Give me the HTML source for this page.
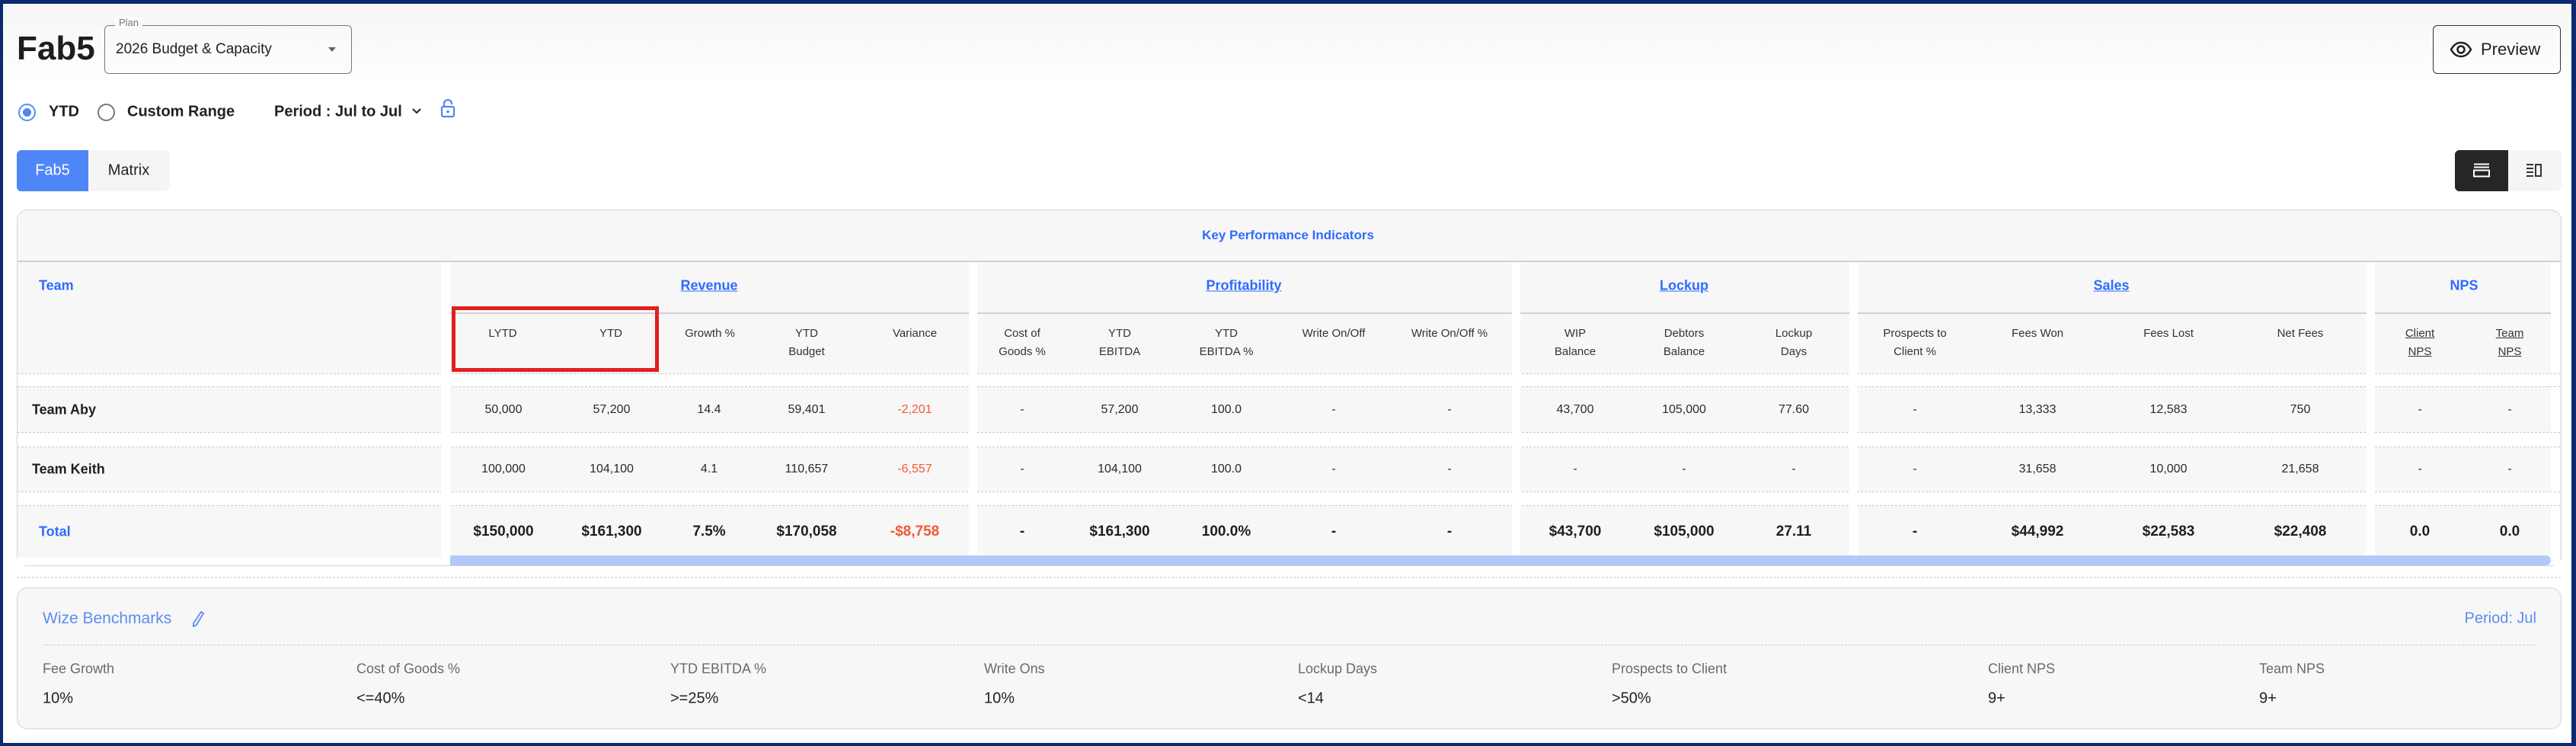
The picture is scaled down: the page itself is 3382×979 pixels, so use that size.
<!DOCTYPE html>
<html><head><meta charset="utf-8"><style>
*{margin:0;padding:0;box-sizing:border-box}
body{width:3382px;height:979px;overflow:hidden;background:#0b2a70;font-family:"Liberation Sans",sans-serif;color:#1f1f1f}
#page{position:absolute;left:4px;top:5px;width:3372px;height:970px;background:linear-gradient(#f6f6f6 0,#fff 110px,#fff 100%);overflow:hidden}
.a{position:absolute;white-space:nowrap}
.c{position:absolute;white-space:nowrap;transform:translate(-50%,-50%);text-align:center}
.l{position:absolute;white-space:nowrap;transform:translateY(-50%)}
.bl{color:#2f6bff}
.u{text-decoration:underline}
.sh{font-size:15px;color:#333;line-height:24px}
.d{font-size:16px;color:#2a2a2a}
.t{font-size:19px;font-weight:bold;color:#1f1f1f}
.r{color:#f25a38}
.wv{position:absolute;background:#fff}
.dash{position:absolute;height:0;border-top:1px dashed #c9c9c9}
.bk{font-size:18px;color:#6a6a6a}
.bv{font-size:20px;color:#222}
</style></head><body><div id="page">
</div>
<div style="position:absolute;left:0;top:0;width:3382px;height:979px">
<!-- header -->
<div class="l" style="left:22px;top:64px;font-size:44px;font-weight:bold;color:#1d1d1d">Fab5</div>
<div class="a" style="left:137px;top:33px;width:325px;height:64px;border:1.5px solid #777;border-radius:6px"></div>
<div class="a" style="left:151px;top:22px;padding:0 5px;background:#fbfbfb;font-size:13px;color:#777">Plan</div>
<div class="l" style="left:152px;top:65px;font-size:19px;color:#222">2026 Budget &amp; Capacity</div>
<div class="a" style="left:431px;top:62px;width:0;height:0;border-left:5px solid transparent;border-right:5px solid transparent;border-top:6px solid #666"></div>

<div class="a" style="left:3194px;top:33px;width:168px;height:64px;border:1.5px solid #333;border-radius:6px"></div>
<svg class="a" style="left:3216px;top:54px" width="30" height="22" viewBox="0 0 30 22"><path d="M2 11C6 4 10 2 15 2s9 2 13 9c-4 7-8 9-13 9S6 18 2 11z" fill="none" stroke="#222" stroke-width="2.5"/><circle cx="15" cy="11" r="4.5" fill="none" stroke="#222" stroke-width="2.5"/></svg>
<div class="l" style="left:3257px;top:65px;font-size:22px;color:#222">Preview</div>

<!-- radio row -->
<div class="a" style="left:24px;top:136px;width:23px;height:23px;border:2px solid #5b8def;border-radius:50%"></div>
<div class="a" style="left:30px;top:142px;width:11px;height:11px;background:#4f86f7;border-radius:50%"></div>
<div class="l" style="left:64px;top:147px;font-size:20px;font-weight:bold;color:#222">YTD</div>
<div class="a" style="left:128px;top:136px;width:23px;height:23px;border:2px solid #777;border-radius:50%"></div>
<div class="l" style="left:167px;top:147px;font-size:20px;font-weight:bold;color:#222">Custom Range</div>
<div class="l" style="left:360px;top:147px;font-size:20px;font-weight:bold;color:#222">Period : Jul to Jul</div>
<svg class="a" style="left:540px;top:141px" width="14" height="10" viewBox="0 0 14 10"><path d="M2 2l5 5 5-5" fill="none" stroke="#222" stroke-width="2"/></svg>
<svg class="a" style="left:578px;top:130px" width="20" height="25" viewBox="0 0 20 25"><path d="M5 10V6a5 5 0 0 1 10 0v1" fill="none" stroke="#4f86f7" stroke-width="2.2"/><rect x="2" y="10" width="16" height="13" rx="2" fill="none" stroke="#4f86f7" stroke-width="2.2"/><circle cx="10" cy="16.5" r="1.8" fill="#4f86f7"/></svg>

<!-- tabs -->
<div class="a" style="left:22px;top:197px;width:201px;height:54px;background:#f5f5f5;border-radius:6px"></div>
<div class="a" style="left:22px;top:197px;width:94px;height:54px;background:#4f86f7;border-radius:6px 0 0 6px"></div>
<div class="c" style="left:69px;top:224px;font-size:20px;color:#fff">Fab5</div>
<div class="c" style="left:169px;top:224px;font-size:20px;color:#222">Matrix</div>

<div class="a" style="left:3223px;top:197px;width:140px;height:54px;background:#f5f5f5;border-radius:6px"></div>
<div class="a" style="left:3223px;top:197px;width:70px;height:54px;background:#262626;border-radius:6px 0 0 6px"></div>
<svg class="a" style="left:3247px;top:214px" width="22" height="19" viewBox="0 0 22 19"><path d="M1 1.5h20M1 5.5h20" stroke="#fff" stroke-width="2"/><rect x="1" y="9.5" width="20" height="8" fill="none" stroke="#fff" stroke-width="2"/></svg>
<svg class="a" style="left:3316px;top:214px" width="22" height="19" viewBox="0 0 22 19"><path d="M1 2h9M1 7h9M1 12h9M1 17h9" stroke="#333" stroke-width="2"/><rect x="13" y="2" width="7" height="15" fill="none" stroke="#333" stroke-width="2"/></svg>

<!-- KPI card -->
<div class="a" style="left:22px;top:275px;width:3341px;height:468px;background:#f7f7f7;border:1.5px solid #d4d4d4;border-radius:14px;overflow:hidden">
</div>
<div class="a" style="left:23px;top:342px;width:3339px;height:2px;background:#d0d0d0"></div>
<div class="c bl" style="left:1691px;top:309px;font-size:17px;font-weight:bold">Key Performance Indicators</div>
<!-- vertical white gaps -->
<div class="wv" style="left:579px;top:344px;width:12px;height:387px"></div>
<div class="wv" style="left:1272px;top:344px;width:11px;height:387px"></div>
<div class="wv" style="left:1985px;top:344px;width:11px;height:387px"></div>
<div class="wv" style="left:2428px;top:344px;width:11px;height:387px"></div>
<div class="wv" style="left:3107px;top:344px;width:11px;height:387px"></div>
<div class="wv" style="left:3349px;top:344px;width:12px;height:387px"></div>
<div class="wv" style="left:23px;top:731px;width:3338px;height:11px"></div>
<!-- group header underline -->
<div class="a" style="left:591px;top:410px;width:681px;height:2px;background:#d0d0d0"></div>
<div class="a" style="left:1283px;top:410px;width:702px;height:2px;background:#d0d0d0"></div>
<div class="a" style="left:1996px;top:410px;width:432px;height:2px;background:#d0d0d0"></div>
<div class="a" style="left:2439px;top:410px;width:668px;height:2px;background:#d0d0d0"></div>
<div class="a" style="left:3118px;top:410px;width:231px;height:2px;background:#d0d0d0"></div>
<!-- horizontal white bands -->
<div class="wv" style="left:23px;top:490px;width:3338px;height:18px;border-top:1px dashed #c9c9c9;border-bottom:1px dashed #c9c9c9"></div>
<div class="wv" style="left:23px;top:567px;width:3338px;height:20px;border-top:1px dashed #c9c9c9;border-bottom:1px dashed #c9c9c9"></div>
<div class="wv" style="left:23px;top:645px;width:3338px;height:19px;border-top:1px dashed #c9c9c9;border-bottom:1px dashed #c9c9c9"></div>
<div class="wv" style="left:579px;top:490px;width:12px;height:241px"></div>
<div class="wv" style="left:1272px;top:490px;width:11px;height:241px"></div>
<div class="wv" style="left:1985px;top:490px;width:11px;height:241px"></div>
<div class="wv" style="left:2428px;top:490px;width:11px;height:241px"></div>
<div class="wv" style="left:3107px;top:490px;width:11px;height:241px"></div>
<!-- scrollbar -->
<div class="a" style="left:591px;top:729px;width:2758px;height:13px;background:#b1c9f8;border-radius:0 7px 7px 0"></div>

<!-- group headers -->
<div class="l bl" style="left:51px;top:375px;font-size:18px;font-weight:bold">Team</div>
<div class="c bl u" style="left:931px;top:375px;font-size:18px;font-weight:bold">Revenue</div>
<div class="c bl u" style="left:1633px;top:375px;font-size:18px;font-weight:bold">Profitability</div>
<div class="c bl u" style="left:2211px;top:375px;font-size:18px;font-weight:bold">Lockup</div>
<div class="c bl u" style="left:2772px;top:375px;font-size:18px;font-weight:bold">Sales</div>
<div class="c bl" style="left:3235px;top:375px;font-size:18px;font-weight:bold">NPS</div>

<!-- sub headers -->
<div class="c sh" style="left:660px;top:438px">LYTD</div>
<div class="c sh" style="left:802px;top:438px">YTD</div>
<div class="c sh" style="left:932px;top:438px">Growth %</div>
<div class="c sh" style="left:1059px;top:450px">YTD<br>Budget</div>
<div class="c sh" style="left:1201px;top:438px">Variance</div>
<div class="c sh" style="left:1342px;top:450px">Cost of<br>Goods %</div>
<div class="c sh" style="left:1470px;top:450px">YTD<br>EBITDA</div>
<div class="c sh" style="left:1610px;top:450px">YTD<br>EBITDA %</div>
<div class="c sh" style="left:1751px;top:438px">Write On/Off</div>
<div class="c sh" style="left:1903px;top:438px">Write On/Off %</div>
<div class="c sh" style="left:2068px;top:450px">WIP<br>Balance</div>
<div class="c sh" style="left:2211px;top:450px">Debtors<br>Balance</div>
<div class="c sh" style="left:2355px;top:450px">Lockup<br>Days</div>
<div class="c sh" style="left:2514px;top:450px">Prospects to<br>Client %</div>
<div class="c sh" style="left:2675px;top:438px">Fees Won</div>
<div class="c sh" style="left:2847px;top:438px">Fees Lost</div>
<div class="c sh" style="left:3020px;top:438px">Net Fees</div>
<div class="c sh bl u" style="left:3177px;top:450px">Client<br>NPS</div>
<div class="c sh bl u" style="left:3295px;top:450px">Team<br>NPS</div>

<!-- red box -->
<div class="a" style="left:593px;top:402px;width:272px;height:86px;border:5px solid #e21f1f"></div>

<!-- rows -->
<div class="l" style="left:42px;top:538px;font-size:18px;font-weight:bold">Team Aby</div>
<div class="l" style="left:42px;top:616px;font-size:18px;font-weight:bold">Team Keith</div>
<div class="l bl" style="left:51px;top:698px;font-size:18px;font-weight:bold">Total</div>

<div class="c d" style="left:661px;top:538px">50,000</div><div class="c d" style="left:803px;top:538px">57,200</div><div class="c d" style="left:931px;top:538px">14.4</div><div class="c d" style="left:1059px;top:538px">59,401</div><div class="c d r" style="left:1201px;top:538px">-2,201</div>
<div class="c d" style="left:1342px;top:538px">-</div><div class="c d" style="left:1470px;top:538px">57,200</div><div class="c d" style="left:1610px;top:538px">100.0</div><div class="c d" style="left:1751px;top:538px">-</div><div class="c d" style="left:1903px;top:538px">-</div>
<div class="c d" style="left:2068px;top:538px">43,700</div><div class="c d" style="left:2211px;top:538px">105,000</div><div class="c d" style="left:2355px;top:538px">77.60</div>
<div class="c d" style="left:2514px;top:538px">-</div><div class="c d" style="left:2675px;top:538px">13,333</div><div class="c d" style="left:2847px;top:538px">12,583</div><div class="c d" style="left:3020px;top:538px">750</div>
<div class="c d" style="left:3177px;top:538px">-</div><div class="c d" style="left:3295px;top:538px">-</div>

<div class="c d" style="left:661px;top:616px">100,000</div><div class="c d" style="left:803px;top:616px">104,100</div><div class="c d" style="left:931px;top:616px">4.1</div><div class="c d" style="left:1059px;top:616px">110,657</div><div class="c d r" style="left:1201px;top:616px">-6,557</div>
<div class="c d" style="left:1342px;top:616px">-</div><div class="c d" style="left:1470px;top:616px">104,100</div><div class="c d" style="left:1610px;top:616px">100.0</div><div class="c d" style="left:1751px;top:616px">-</div><div class="c d" style="left:1903px;top:616px">-</div>
<div class="c d" style="left:2068px;top:616px">-</div><div class="c d" style="left:2211px;top:616px">-</div><div class="c d" style="left:2355px;top:616px">-</div>
<div class="c d" style="left:2514px;top:616px">-</div><div class="c d" style="left:2675px;top:616px">31,658</div><div class="c d" style="left:2847px;top:616px">10,000</div><div class="c d" style="left:3020px;top:616px">21,658</div>
<div class="c d" style="left:3177px;top:616px">-</div><div class="c d" style="left:3295px;top:616px">-</div>

<div class="c t" style="left:661px;top:698px">$150,000</div><div class="c t" style="left:803px;top:698px">$161,300</div><div class="c t" style="left:931px;top:698px">7.5%</div><div class="c t" style="left:1059px;top:698px">$170,058</div><div class="c t r" style="left:1201px;top:698px">-$8,758</div>
<div class="c t" style="left:1342px;top:698px">-</div><div class="c t" style="left:1470px;top:698px">$161,300</div><div class="c t" style="left:1610px;top:698px">100.0%</div><div class="c t" style="left:1751px;top:698px">-</div><div class="c t" style="left:1903px;top:698px">-</div>
<div class="c t" style="left:2068px;top:698px">$43,700</div><div class="c t" style="left:2211px;top:698px">$105,000</div><div class="c t" style="left:2355px;top:698px">27.11</div>
<div class="c t" style="left:2514px;top:698px">-</div><div class="c t" style="left:2675px;top:698px">$44,992</div><div class="c t" style="left:2847px;top:698px">$22,583</div><div class="c t" style="left:3020px;top:698px">$22,408</div>
<div class="c t" style="left:3177px;top:698px">0.0</div><div class="c t" style="left:3295px;top:698px">0.0</div>

<div class="dash" style="left:22px;top:757px;width:3340px"></div>

<!-- benchmarks -->
<div class="a" style="left:22px;top:771px;width:3341px;height:186px;background:#f7f7f7;border:1.5px solid #d4d4d4;border-radius:14px"></div>
<div class="l" style="left:56px;top:812px;font-size:21px;color:#5b8def">Wize Benchmarks</div>
<svg class="a" style="left:252px;top:801px" width="16" height="22" viewBox="0 0 16 22"><path d="M12 2l3 2-9 15-4 2 0-4z" fill="none" stroke="#5b8def" stroke-width="1.8"/></svg>
<div class="a" style="right:52px;top:812px;transform:translateY(-50%);font-size:20px;color:#5b8def">Period: Jul</div>
<div class="dash" style="left:56px;top:846px;width:3274px"></div>
<div class="l bk" style="left:56px;top:878px">Fee Growth</div><div class="l bv" style="left:56px;top:917px">10%</div>
<div class="l bk" style="left:468px;top:878px">Cost of Goods %</div><div class="l bv" style="left:468px;top:917px">&lt;=40%</div>
<div class="l bk" style="left:880px;top:878px">YTD EBITDA %</div><div class="l bv" style="left:880px;top:917px">&gt;=25%</div>
<div class="l bk" style="left:1292px;top:878px">Write Ons</div><div class="l bv" style="left:1292px;top:917px">10%</div>
<div class="l bk" style="left:1704px;top:878px">Lockup Days</div><div class="l bv" style="left:1704px;top:917px">&lt;14</div>
<div class="l bk" style="left:2116px;top:878px">Prospects to Client</div><div class="l bv" style="left:2116px;top:917px">&gt;50%</div>
<div class="l bk" style="left:2610px;top:878px">Client NPS</div><div class="l bv" style="left:2610px;top:917px">9+</div>
<div class="l bk" style="left:2966px;top:878px">Team NPS</div><div class="l bv" style="left:2966px;top:917px">9+</div>
</div>
</body></html>
